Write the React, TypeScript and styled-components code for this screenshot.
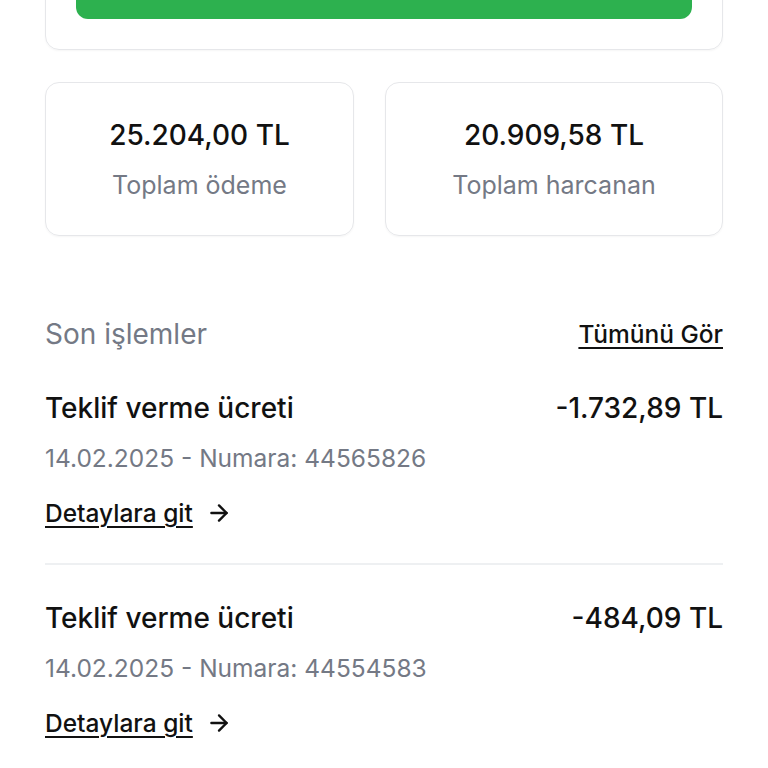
import styled, { createGlobalStyle } from "styled-components";
import { ArrowRight } from "lucide-react";

interface Transaction {
    id: string;
    title: string;
    date: string;
    number: string;
    amount: string;
}

const transactions: Transaction[] = [
    { id: "1", title: "Teklif verme ücreti", date: "14.02.2025", number: "44565826", amount: "-1.732,89 TL" },
    { id: "2", title: "Teklif verme ücreti", date: "14.02.2025", number: "44554583", amount: "-484,09 TL" },
];

const GlobalStyle = createGlobalStyle`
    body {
        margin: 0;
        background: #fff;
        font-family: Inter, "Noto Sans", sans-serif;
        color: #111;
        overflow: hidden;
    }
`;

function App() {
    return (
        <>
            <GlobalStyle />
            <Page>
                <TopCard>
                    <GreenButton />
                </TopCard>
                <Stats>
                    <StatCard>
                        <StatValue>25.204,00 TL</StatValue>
                        <StatLabel>Toplam ödeme</StatLabel>
                    </StatCard>
                    <StatCard>
                        <StatValue>20.909,58 TL</StatValue>
                        <StatLabel>Toplam harcanan</StatLabel>
                    </StatCard>
                </Stats>
                <SectionHeader>
                    <SectionTitle>Son işlemler</SectionTitle>
                    <SeeAll href="#">Tümünü Gör</SeeAll>
                </SectionHeader>
                <List>
                    {transactions.map((t) => (
                        <Row key={t.id}>
                            <RowTop>
                                <RowTitle>{t.title}</RowTitle>
                                <Amount>{t.amount}</Amount>
                            </RowTop>
                            <Meta>
                                {t.date} - Numara: {t.number}
                            </Meta>
                            <DetailLink href="#">
                                <span>Detaylara git</span>
                                <ArrowRight size={26} strokeWidth={2.2} />
                            </DetailLink>
                        </Row>
                    ))}
                </List>
            </Page>
        </>
    );
}

const Page = styled.div`
    margin-top: -60px;
    padding: 0 45px;
`;
const TopCard = styled.div`
    border: 1px solid #e6e7ea;
    border-radius: 14px;
    padding: 30px;
    box-shadow: 0 1px 2px rgba(0, 0, 0, 0.04);
`;
const GreenButton = styled.div`
    height: 48px;
    border-radius: 12px;
    background: #2db14f;
`;
const Stats = styled.div`
    display: grid;
    grid-template-columns: 309px 1fr;
    gap: 31px;
    margin-top: 32px;
`;
const StatCard = styled.div`
    height: 154px;
    box-sizing: border-box;
    border: 1px solid #e6e7ea;
    border-radius: 14px;
    box-shadow: 0 1px 2px rgba(0, 0, 0, 0.04);
    display: flex;
    flex-direction: column;
    align-items: center;
    justify-content: center;
    gap: 18px;
`;
const StatValue = styled.div`
    font-size: 28px;
    font-weight: 500;
    line-height: 34px;
`;
const StatLabel = styled.div`
    font-size: 25px;
    line-height: 30px;
    color: #747985;
`;
const SectionHeader = styled.div`
    display: flex;
    justify-content: space-between;
    align-items: center;
    margin-top: 80px;
    height: 36px;
`;
const SectionTitle = styled.h2`
    margin: 0;
    font-size: 28px;
    font-weight: 400;
    color: #747985;
`;
const SeeAll = styled.a`
    font-size: 24.5px;
    font-weight: 500;
    color: #111;
    text-decoration: underline;
    text-underline-offset: 4px;
    text-decoration-thickness: 2px;
`;
const List = styled.div`
    margin-top: 39px;
`;
const Row = styled.div`
    padding-bottom: 35px;
    & + & {
        border-top: 2px solid #eef0f2;
        padding-top: 36px;
    }
`;
const RowTop = styled.div`
    display: flex;
    justify-content: space-between;
    align-items: center;
`;
const RowTitle = styled.div`
    font-size: 28px;
    font-weight: 500;
    line-height: 34px;
`;
const Amount = styled(RowTitle)``;
const Meta = styled.div`
    margin-top: 17px;
    font-size: 24.5px;
    line-height: 32px;
    color: #747985;
`;
const DetailLink = styled.a`
    margin-top: 24px;
    display: inline-flex;
    align-items: center;
    gap: 13px;
    color: #111;
    text-decoration: none;
    font-size: 24.5px;
    font-weight: 500;
    line-height: 30px;
    span {
        text-decoration: underline;
        text-underline-offset: 4px;
        text-decoration-thickness: 2px;
    }
`;

export default App;
